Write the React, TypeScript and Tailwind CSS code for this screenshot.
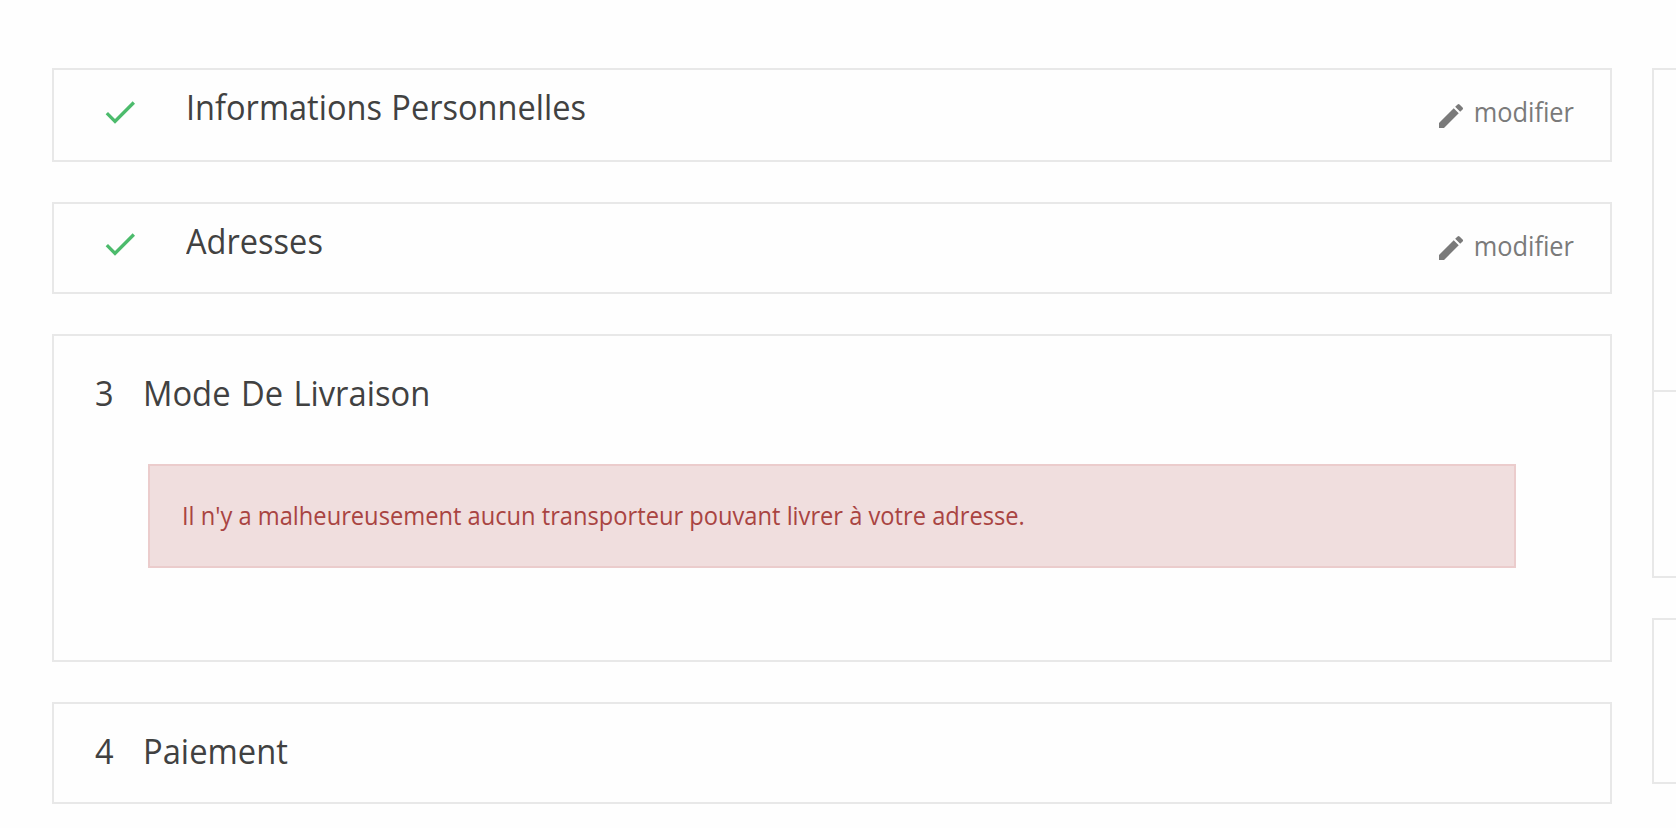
import { clsx } from 'clsx'

const CHECK = 'M9 16.2 4.8 12l-1.4 1.4L9 19 21 7l-1.4-1.4L9 16.2z'
const PENCIL =
  'M3 17.25V21h3.75L17.81 9.94l-3.75-3.75L3 17.25zM20.71 7.04a1 1 0 0 0 0-1.41l-2.34-2.34a1 1 0 0 0-1.41 0l-1.83 1.83 3.75 3.75 1.83-1.83z'

type DoneStepProps = { title: string; className: string; iconClass: string }

function DoneStep({ title, className, iconClass }: DoneStepProps) {
  return (
    <section className={clsx('flex items-start border-2 border-[#e8e8e8] pl-[46px] pr-[36px]', className)}>
      <svg viewBox="0 0 24 24" className={clsx('size-10 shrink-0 fill-[#4cbb6c]', iconClass)}>
        <path d={CHECK} />
      </svg>
      <h1 className="mt-[17px] ml-[46px] origin-left scale-x-[0.93] text-[35px] leading-10 [word-spacing:1px] whitespace-nowrap">
        {title}
      </h1>
      <button type="button" className="ml-auto flex items-start text-[#7a7a7a]">
        <svg viewBox="0 0 24 24" className={clsx('size-8 shrink-0 translate-y-2 fill-current', iconClass)}>
          <path d={PENCIL} />
        </svg>
        <span className="mt-[22px] w-[107px] origin-right scale-x-[0.94] text-right text-[27px] leading-10">modifier</span>
      </button>
    </section>
  )
}

function StepTitle({ number, title }: { number: number; title: string }) {
  return (
    <h1 className="flex text-[35px] leading-10">
      <span className="w-[49px] origin-left translate-x-px scale-x-[0.93]">{number}</span>
      <span className="origin-left scale-x-[0.935] [word-spacing:2px]">{title}</span>
    </h1>
  )
}

export default function App() {
  return (
    <div className="flex h-screen gap-10 overflow-hidden bg-[#fefefe] pt-[68px] pl-[52px] font-['Open_Sans',sans-serif] text-[#414141]">
      <main className="flex w-[1560px] shrink-0 flex-col gap-10">
        <DoneStep title="Informations Personnelles" className="h-[94px]" iconClass="mt-[22px]" />
        <DoneStep title="Adresses" className="h-[92px]" iconClass="mt-5" />

        <section className="h-[328px] border-2 border-[#e8e8e8] pt-[37px] pl-[40px]">
          <StepTitle number={3} title="Mode De Livraison" />
          <div className="mt-[51px] ml-[54px] flex h-[104px] w-[1368px] items-center border-2 border-[#ebcccc] bg-[#f0dede] pb-[3px] pl-[32px]">
            <p className="origin-left scale-x-[0.947] text-[25px] leading-9 text-[#a94442]">
              Il n'y a malheureusement aucun transporteur pouvant livrer à votre adresse.
            </p>
          </div>
        </section>

        <section className="h-[102px] border-2 border-[#e8e8e8] pt-[27px] pl-[40px]">
          <StepTitle number={4} title="Paiement" />
        </section>
      </main>

      <aside className="flex w-[400px] shrink-0 flex-col gap-10">
        <section className="h-[510px] border-2 border-[#e8e8e8]">
          <div className="h-[322px] border-b-2 border-[#e8e8e8]" />
        </section>
        <section className="h-[166px] border-2 border-[#e8e8e8]" />
      </aside>
    </div>
  )
}
